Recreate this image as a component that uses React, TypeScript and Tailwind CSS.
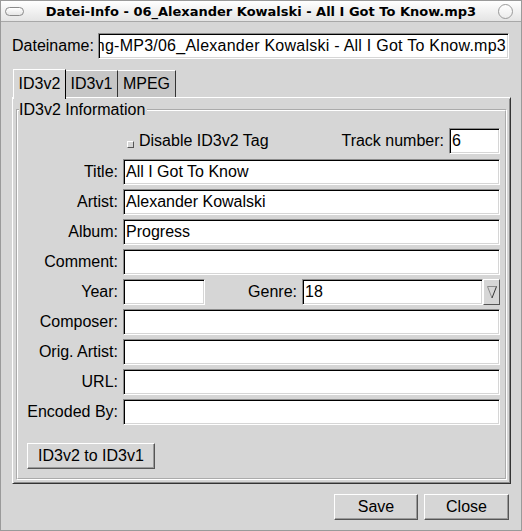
import React from 'react';

const entry =
  'h-[26px] bg-white border border-t-[#8c8c8c] border-l-[#8c8c8c] border-r-white border-b-white shadow-[inset_1px_1px_0_#000,inset_-1px_-1px_0_#d6d6d6] flex items-center px-[2px] overflow-hidden whitespace-nowrap';

const button =
  'h-[26px] bg-[#d6d6d6] border border-t-white border-l-white border-r-[#555] border-b-[#555] shadow-[inset_-1px_-1px_0_#9a9a9a] flex items-center justify-center';

function Row({ label, value }: { label: string; value?: string }) {
  return (
    <div className="flex items-center">
      <span className="w-[100px] text-right shrink-0">{label}</span>
      <div className={`${entry} ml-[5px] flex-1`}>{value}</div>
    </div>
  );
}

export default function App() {
  return (
    <div
      className="w-[522px] h-[531px] bg-[#d6d6d6] text-black border border-[#9a9a9a] flex flex-col overflow-hidden"
      style={{ fontFamily: '"Liberation Sans", Arial, sans-serif', fontSize: 16 }}
    >
      {/* Title bar */}
      <div className="h-[21px] shrink-0 flex items-center bg-gradient-to-b from-[#ffffff] to-[#e4e4e4] border-b border-[#a8a8a8] px-[4px]">
        <div className="w-[19px] h-[9px] rounded-full border border-[#8a8a8a] bg-gradient-to-b from-white to-[#e6e6e6]" />
        <div
          className="flex-1 text-center font-bold text-[13px] leading-none"
          style={{ fontFamily: '"DejaVu Sans", sans-serif' }}
        >
          Datei-Info - 06_Alexander Kowalski - All I Got To Know.mp3
        </div>
        <div className="w-[15px] h-[15px] rounded-full border border-[#9a9a9a] bg-gradient-to-b from-white to-[#ececec] mr-[4px]" />
      </div>

      <div className="flex-1 flex flex-col pl-[11px] pr-[10px]">
        {/* Filename */}
        <div className="flex items-center mt-[11px] pr-[2px]">
          <span className="shrink-0">Dateiname:</span>
          <div className={`${entry} ml-[4px] flex-1 justify-end px-[1px]`}>
            <span className="tracking-[0.25px]">ng-MP3/06_Alexander Kowalski - All I Got To Know.mp3</span>
          </div>
        </div>

        {/* Tabs */}
        <div className="flex mt-[10px] pl-[1px] items-end relative z-10">
          <div className="h-[30px] w-[53px] -mb-[2px] bg-[#d6d6d6] border-t border-l border-t-white border-l-white border-r border-r-black flex items-center justify-center pb-[2px]">
            ID3v2
          </div>
          <div className="h-[27px] w-[52px] bg-[#c6c6c6] border-t border-t-white border-r border-r-[#333] flex items-center justify-center">
            ID3v1
          </div>
          <div className="h-[27px] w-[58px] bg-[#c6c6c6] border-t border-t-white border-r border-r-[#333] flex items-center justify-center">
            MPEG
          </div>
        </div>

        {/* Notebook */}
        <div className="border border-t-white border-l-white border-r-[#333] border-b-[#333] shadow-[inset_1px_1px_0_#d6d6d6,inset_-1px_-1px_0_#8c8c8c] p-[3px]">
          <fieldset className="border-2 border-white [border-style:groove] px-0 pb-[9px]">
            <legend className="ml-px pr-[2px] leading-[18px]">ID3v2 Information</legend>
            <div className="pt-[9px] pr-[5px]">
              <div className="flex items-center h-[26px] mb-[5px]">
                <div className="w-[100px] shrink-0" />
                <div className="ml-[9px] mt-[6px] w-[7px] h-[7px] border border-t-white border-l-white border-r-[#555] border-b-[#555] bg-[#d6d6d6]" />
                <span className="ml-[5px]">Disable ID3v2 Tag</span>
                <span className="ml-auto">Track number:</span>
                <div className={`${entry} ml-[5px] w-[51px]`}>6</div>
              </div>

              <div className="flex flex-col gap-[4px]">
                <Row label="Title:" value="All I Got To Know" />
                <Row label="Artist:" value="Alexander Kowalski" />
                <Row label="Album:" value="Progress" />
                <Row label="Comment:" />
                <div className="flex items-center">
                  <span className="w-[100px] text-right shrink-0">Year:</span>
                  <div className={`${entry} ml-[5px] w-[82px]`} />
                  <span className="ml-auto">Genre:</span>
                  <div className="ml-[5px] w-[198px] flex">
                    <div className={`${entry} flex-1`}>18</div>
                    <div className="w-[17px] h-[26px] bg-[#d6d6d6] border border-t-white border-l-white border-r-[#555] border-b-[#555] flex items-center justify-center">
                      <svg width="10" height="14" viewBox="0 0 10 14">
                        <path d="M0.5 1.5 L9.5 1.5" stroke="#8a8a8a" strokeWidth="1" />
                        <path d="M0.5 1.5 L5 13" stroke="#8a8a8a" strokeWidth="1" />
                        <path d="M9.5 1.5 L5 13" stroke="#333" strokeWidth="1" />
                      </svg>
                    </div>
                  </div>
                </div>
                <Row label="Composer:" />
                <Row label="Orig. Artist:" />
                <Row label="URL:" />
                <Row label="Encoded By:" />
              </div>

              <div className={`${button} w-[128px] ml-[9px] mt-[18px]`}>ID3v2 to ID3v1</div>
            </div>
          </fieldset>
        </div>

        {/* Bottom buttons */}
        <div className="flex justify-end gap-[6px] mt-[10px] pr-[2px]">
          <div className={`${button} w-[84px]`}>Save</div>
          <div className={`${button} w-[85px]`}>Close</div>
        </div>
      </div>
    </div>
  );
}
